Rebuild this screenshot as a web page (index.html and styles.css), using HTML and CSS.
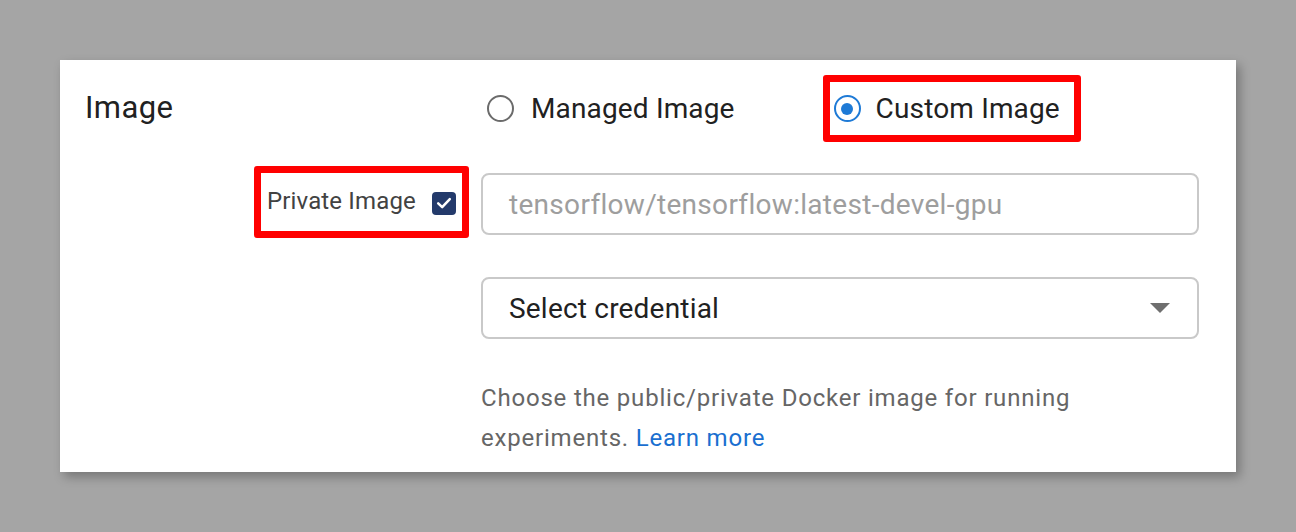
FILE: index.html
```html
<!DOCTYPE html>
<html>
<head>
<meta charset="utf-8">
<link rel="stylesheet" href="styles.css">
</head>
<body>
<div class="card">
  <div class="row row-image">
    <div class="label-col"><span class="section-label">Image</span></div>
    <div class="field-col radios">
      <label class="radio-opt managed">
        <span class="radio"></span>
        <span class="radio-text">Managed Image</span>
      </label>
      <label class="radio-opt custom highlight">
        <span class="radio checked"><span class="dot"></span></span>
        <span class="radio-text">Custom Image</span>
      </label>
    </div>
  </div>
  <div class="row row-input">
    <div class="label-col right">
      <div class="private highlight">
        <span class="private-text">Private Image</span>
        <span class="checkbox">
          <svg width="18" height="18" viewBox="0 0 18 18"><path d="M3.2 9.4 L7.2 13.2 L14.8 5.2" fill="none" stroke="#fff" stroke-width="2.5" stroke-linecap="round" stroke-linejoin="round"/></svg>
        </span>
      </div>
    </div>
    <div class="field-col">
      <div class="text-input"><span class="placeholder">tensorflow/tensorflow:latest-devel-gpu</span></div>
    </div>
  </div>
  <div class="row row-select">
    <div class="label-col"></div>
    <div class="field-col">
      <div class="select"><span class="select-text">Select credential</span><span class="caret"></span></div>
    </div>
  </div>
  <div class="row row-help">
    <div class="label-col"></div>
    <div class="field-col">
      <p class="help">Choose the public/private Docker image for running experiments. <a class="link" href="#">Learn more</a></p>
    </div>
  </div>
</div>
</body>
</html>
```
FILE: styles.css
```css
* { box-sizing: border-box; }
html, body { margin: 0; padding: 0; }
body {
  background: #a5a5a5;
  width: 1296px;
  height: 532px;
  font-family: Roboto, "Noto Sans", sans-serif;
  padding: 60px 0 0 60px;
}
.card {
  width: 1176px;
  height: 412px;
  background: #ffffff;
  box-shadow: 4px 5px 10px rgba(0,0,0,0.28);
  padding: 15px 37px 0 25px;
}
.row {
  display: flex;
}
.label-col {
  width: 396px;
  flex: none;
}
.label-col.right {
  display: flex;
  justify-content: flex-end;
  padding-right: 12px;
}
.field-col {
  width: 718px;
  flex: none;
}
.row-image {
  height: 67px;
  align-items: center;
}
.row-image .label-col { display: flex; align-items: center; }
.section-label {
  font-size: 31px;
  letter-spacing: 0.4px;
  color: #212121;
  margin-top: -3px;
}
.radios {
  display: flex;
  align-items: center;
  height: 67px;
}
.radio-opt {
  display: flex;
  align-items: center;
  color: #212121;
  font-size: 28px;
  letter-spacing: 0.15px;
}
.managed {
  margin-left: 6px;
  margin-right: 88px;
}
.radio {
  width: 27px;
  height: 27px;
  border-radius: 50%;
  border: 2.5px solid #6b6b6b;
  display: flex;
  align-items: center;
  justify-content: center;
  flex: none;
}
.radio.checked { border-color: #1e7ad6; }
.dot {
  width: 12px;
  height: 12px;
  border-radius: 50%;
  background: #1e7ad6;
}
.radio-text { margin-left: 17px; }
.highlight {
  border: 7px solid #ff0000;
  border-radius: 3px;
}
.custom {
  height: 67px;
  width: 258px;
  padding-left: 4px;
}
.custom .radio-text { margin-left: 15px; }
.row-input {
  margin-top: 24px;
}
.private {
  height: 72px;
  width: 215px;
  display: flex;
  align-items: center;
  padding: 0 6px;
  justify-content: space-between;
}
.private-text {
  font-size: 24px;
  letter-spacing: 0.15px;
  color: #424242;
  margin-top: -2px;
}
.checkbox {
  width: 24px;
  height: 23px;
  border-radius: 4px;
  background: #233a6b;
  display: flex;
  align-items: center;
  justify-content: center;
  margin-top: 2px;
}
.checkbox svg { display: block; }
.text-input, .select {
  height: 62px;
  border: 2px solid #c9c9c9;
  border-radius: 8px;
  display: flex;
  align-items: center;
  padding: 0 26px;
}
.text-input { margin-top: 7px; }
.placeholder {
  font-size: 28px;
  letter-spacing: 0.3px;
  color: #9e9e9e;
}
.row-select { margin-top: 39px; }
.select { justify-content: space-between; padding-right: 27px; }
.select-text {
  font-size: 28px;
  letter-spacing: 0.2px;
  color: #212121;
}
.caret {
  width: 0;
  height: 0;
  border-left: 10px solid transparent;
  border-right: 10px solid transparent;
  border-top: 10px solid #6f6f6f;
}
.row-help { margin-top: 39px; }
.help {
  margin: 0;
  font-size: 24px;
  line-height: 40px;
  color: #666666;
  letter-spacing: 0.8px;
  width: 620px;
}
.link {
  color: #1a6fd0;
  text-decoration: none;
}
```
